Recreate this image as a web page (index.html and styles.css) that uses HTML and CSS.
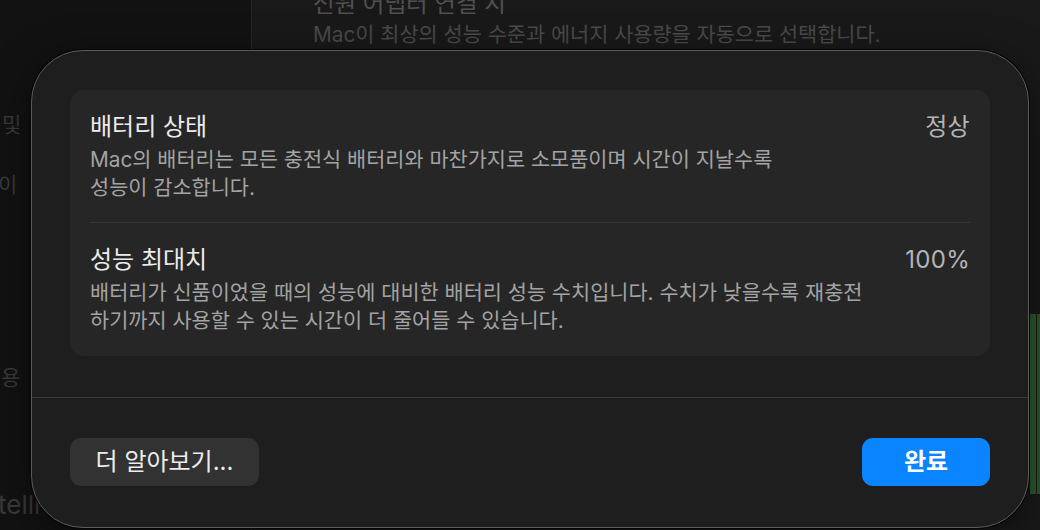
FILE: index.html
```html
<!DOCTYPE html>
<html lang="ko">
<head>
<meta charset="utf-8">
<title>배터리 상태</title>
<link rel="stylesheet" href="styles.css">
</head>
<body>
<div class="app">
  <aside class="sidebar">
    <div class="frag frag-1">및</div>
    <div class="frag frag-2">이</div>
    <div class="frag frag-3">용</div>
    <div class="frag frag-4">telli</div>
  </aside>
  <main class="main">
    <div class="bg-title">전원 어댑터 연결 시</div>
    <div class="bg-sub">Mac이 최상의 성능 수준과 에너지 사용량을 자동으로 선택합니다.</div>
    <div class="chart"><span class="bar"></span><span class="bar bar-b"></span></div>
  </main>
</div>

<div class="sheet">
  <div class="sheet-body">
    <div class="card">
      <div class="row">
        <div class="row-text">
          <div class="row-title">배터리 상태</div>
          <div class="row-desc">Mac의 배터리는 모든 충전식 배터리와 마찬가지로 소모품이며 시간이 지날수록<br>성능이 감소합니다.</div>
        </div>
        <div class="row-value">정상</div>
      </div>
      <div class="row">
        <div class="row-text">
          <div class="row-title">성능 최대치</div>
          <div class="row-desc">배터리가 신품이었을 때의 성능에 대비한 배터리 성능 수치입니다. 수치가 낮을수록 재충전 하기까지 사용할 수 있는 시간이 더 줄어들 수 있습니다.</div>
        </div>
        <div class="row-value">100%</div>
      </div>
    </div>
  </div>
  <div class="sheet-footer">
    <button class="btn btn-secondary">더 알아보기...</button>
    <button class="btn btn-primary">완료</button>
  </div>
</div>
</body>
</html>
```

FILE: styles.css
```css
* { box-sizing: border-box; }

html, body {
  margin: 0;
  padding: 0;
  width: 1040px;
  height: 530px;
  overflow: hidden;
  background: #121212;
  font-family: Inter, "Noto Sans CJK KR", sans-serif;
}

.app {
  display: flex;
  height: 530px;
}

.sidebar {
  width: 252px;
  flex: none;
  background: #121212;
  border-right: 1px solid #262626;
  display: flex;
  flex-direction: column;
  color: #3a3a3a;
  font-size: 21px;
  line-height: 24px;
}

.frag { white-space: nowrap; }
.frag-1 { margin-top: 113px; padding-left: 2px; }
.frag-2 { margin-top: 36px; margin-left: -2px; }
.frag-3 { margin-top: 169px; padding-left: 1px; }
.frag-4 { margin-top: 103px; margin-left: -2px; font-size: 26px; }

.main {
  flex: 1;
  background: #191919;
  display: flex;
  flex-direction: column;
  padding-left: 61px;
}

.bg-title {
  margin-top: -10px;
  font-size: 23.5px;
  line-height: 28px;
  color: #505050;
  white-space: nowrap;
}

.bg-sub {
  margin-top: 3px;
  font-size: 20.8px;
  line-height: 28px;
  color: #4a4a4a;
  white-space: nowrap;
}

.chart {
  align-self: flex-end;
  margin-top: 265px;
  width: 10px;
  height: 180px;
  display: flex;
  gap: 1px;
}

.bar {
  flex: 6;
  background: #2b5a2d;
}
.bar-b { flex: 3; }

/* Sheet overlay */
.sheet {
  position: absolute;
  left: 31px;
  top: 50px;
  width: 998px;
  height: 478px;
  background: #1e1e1e;
  border: 1px solid #5c5c5c;
  border-radius: 52px;
  box-shadow: 0 0 0 1px #050505, 0 10px 40px rgba(0,0,0,0.5);
  display: flex;
  flex-direction: column;
}

.sheet-body {
  padding: 39px 38px 0;
}

.card {
  background: #262626;
  border-radius: 14px;
  padding: 0 20px;
}

.row {
  display: flex;
  justify-content: space-between;
  align-items: flex-start;
  padding: 23px 0 20px;
}

.row + .row {
  border-top: 1px solid #363636;
  padding: 23px 0 21px;
}

.row-text {
  max-width: 800px;
  word-break: keep-all;
}

.row-title {
  font-size: 24px;
  line-height: 28px;
  color: #ececec;
  margin-bottom: 5px;
}

.row-desc {
  font-size: 20.8px;
  line-height: 28px;
  color: #a3a3a3;
}

.row-value {
  font-size: 24px;
  line-height: 28px;
  color: #b4b4b4;
  white-space: nowrap;
  letter-spacing: 0.3px;
}

.sheet-footer {
  margin-top: 41px;
  border-top: 1px solid #3a3a3a;
  padding: 40px 38px 0;
  display: flex;
  justify-content: space-between;
}

.btn {
  height: 48px;
  border: none;
  border-radius: 11px;
  font-family: inherit;
  font-size: 24px;
  line-height: 28px;
  color: #ececec;
  padding: 0;
}

.btn-secondary {
  width: 189px;
  background: #323232;
}

.btn-primary {
  width: 128px;
  background: #0a84ff;
  color: #ffffff;
  font-weight: 600;
}
```
